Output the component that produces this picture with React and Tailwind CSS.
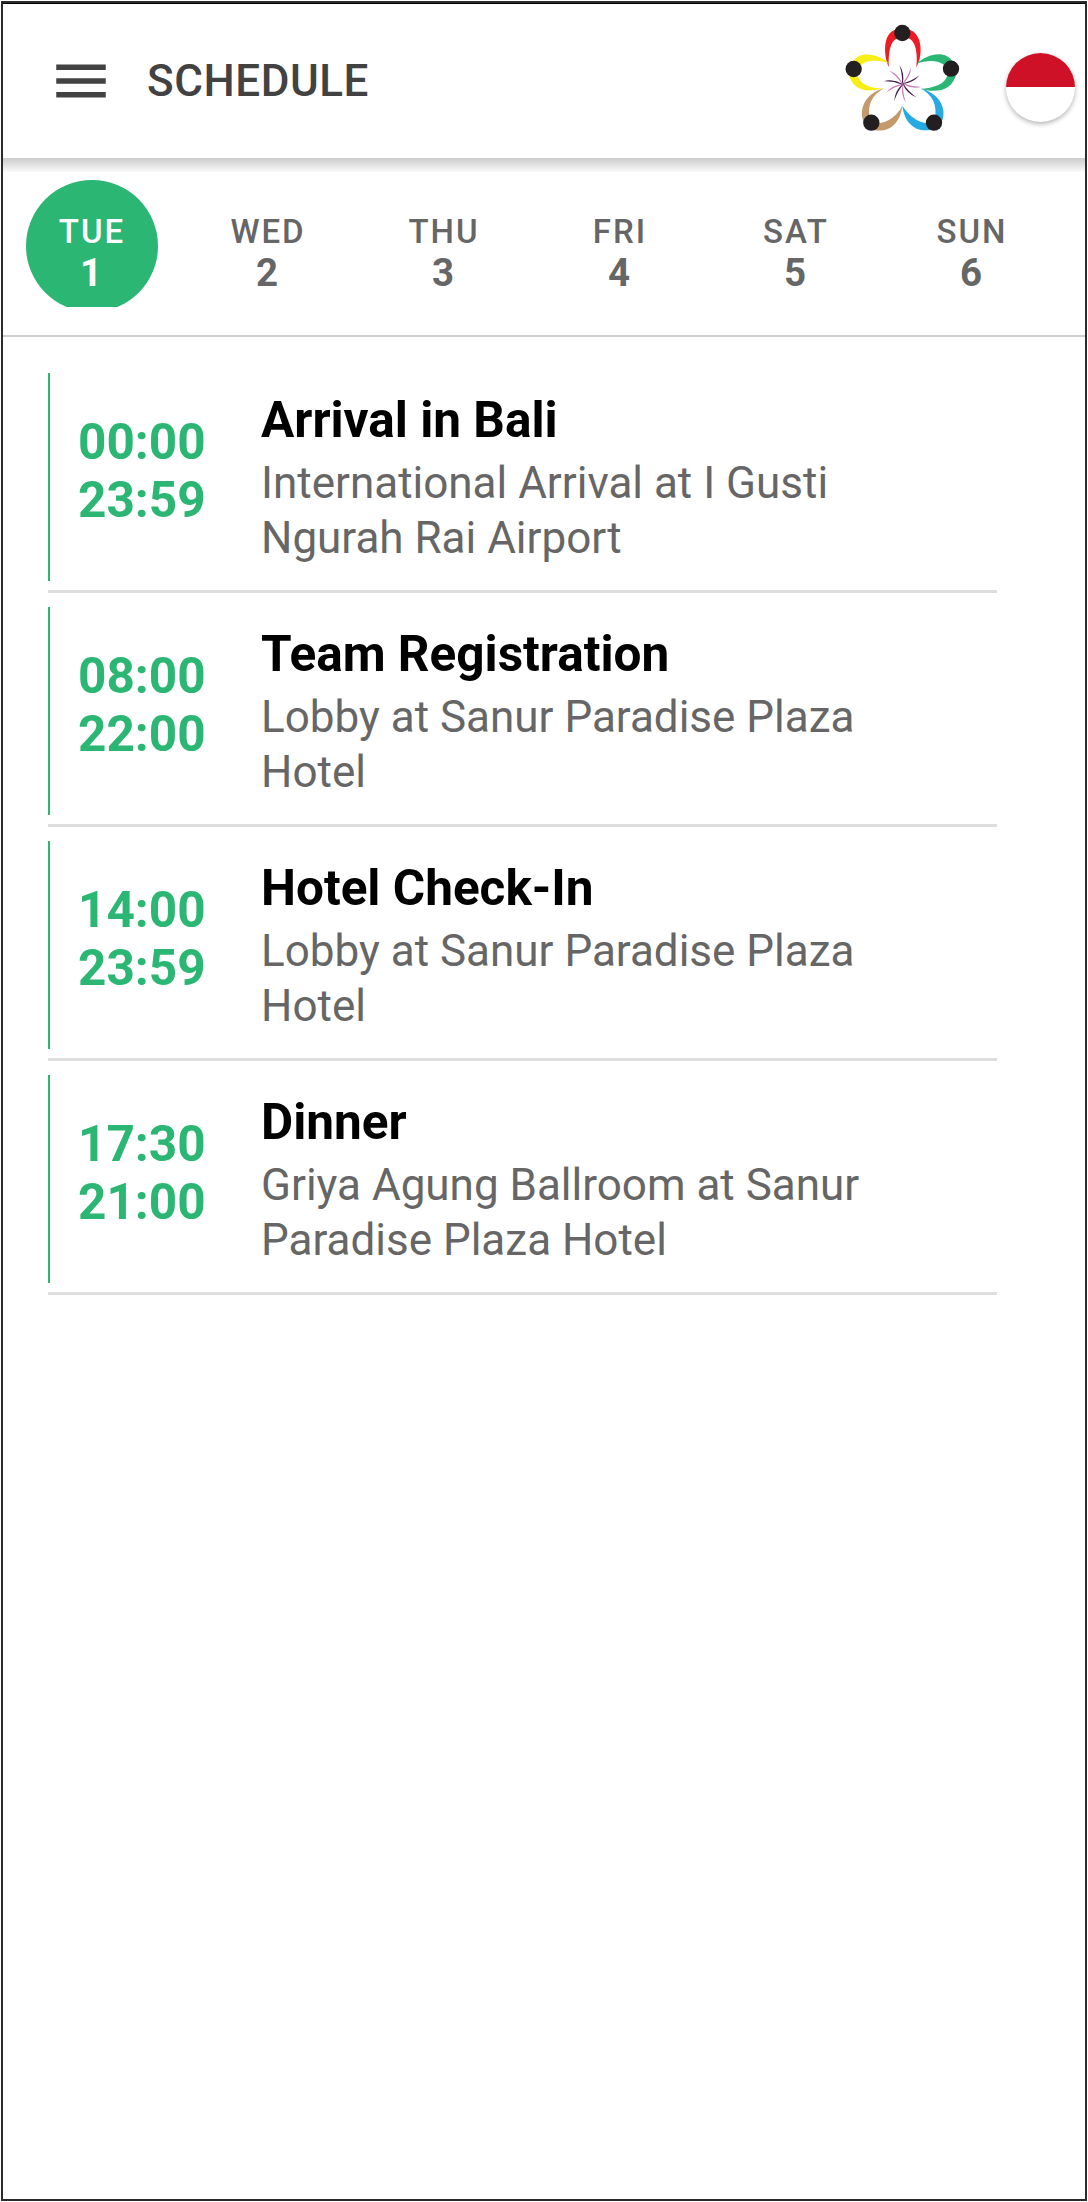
const days = [
  ['TUE', 1],
  ['WED', 2],
  ['THU', 3],
  ['FRI', 4],
  ['SAT', 5],
  ['SUN', 6],
];

const events = [
  { start: '00:00', end: '23:59', title: 'Arrival in Bali', place: 'International Arrival at I Gusti Ngurah Rai Airport' },
  { start: '08:00', end: '22:00', title: 'Team Registration', place: 'Lobby at Sanur Paradise Plaza Hotel' },
  { start: '14:00', end: '23:59', title: 'Hotel Check-In', place: 'Lobby at Sanur Paradise Plaza Hotel' },
  { start: '17:30', end: '21:00', title: 'Dinner', place: 'Griya Agung Ballroom at Sanur Paradise Plaza Hotel' },
];

const heads = [[217, 69], [71, 177], [363, 176], [124, 338], [312, 338]];

const blades = [0, 36, 72, 108, 144, 180, 216, 252, 288, 324];

function MenuIcon() {
  return (
    <svg viewBox="0 0 24 24" className="size-[66px] shrink-0" fill="#424242">
      <path d="M3 18h18v-2H3v2zm0-5h18v-2H3v2zm0-7v2h18V6H3z" />
    </svg>
  );
}

function Logo() {
  return (
    <svg viewBox="0 0 420 420" className="mb-[2px] size-[140px] shrink-0">
      <path fill="#ed1c24" d="M177 172C160 140 155 58 208 58L205 84C180 88 174 135 177 172ZM259 172C280 140 280 58 226 58L232 84C258 88 264 135 259 172Z" />
      <path fill="#f9ed16" d="M178 160C150 135 88 115 66 160L92 166C110 148 150 150 178 160ZM56 192C68 242 110 250 162 234C130 238 90 226 83 196Z" />
      <path fill="#2bb673" d="M260 161C290 134 346 116 370 158L342 165C322 148 290 151 260 161ZM379 192C366 242 322 250 272 237C310 234 345 224 352 196Z" />
      <path fill="#27aae1" d="M272 235C322 248 350 290 338 328L330 340L315 325C322 285 308 255 272 235ZM217 287C222 330 248 368 302 360L294 340C260 338 234 313 217 287Z" />
      <path fill="#c49a6c" d="M162 235C112 248 88 290 98 328L106 340L119 320C112 288 125 255 162 235ZM217 287C212 332 185 368 134 361L142 340C175 338 203 315 217 287Z" />
      {heads.map(([x, y]) => (
        <circle key={x} cx={x} cy={y} r="24.5" fill="#231f20" />
      ))}
      {blades.map((angle, i) => (
        <path
          key={angle}
          transform={`translate(218 222) rotate(${angle})`}
          d="M0 0Q7 -32 -10 -57Q0 -30 -2 0Z"
          fill={i % 2 ? '#c77fb8' : '#3f1a45'}
        />
      ))}
    </svg>
  );
}

function Header() {
  return (
    <header className="flex h-[154px] items-center bg-white pl-[45px]">
      <MenuIcon />
      <h1 className="ml-[33px] grow text-[44px] leading-none font-medium tracking-[0.55px] text-[#424242]">SCHEDULE</h1>
      <Logo />
      <div className="mt-[12px] mr-[10px] ml-[36px] flex size-[69px] shrink-0 flex-col overflow-hidden rounded-full bg-white shadow-[0_2px_5px_rgba(0,0,0,0.3)]">
        <div className="h-[34px] bg-[#ce1126]" />
      </div>
    </header>
  );
}

function DayTabs() {
  return (
    <nav className="h-[179px] border-b-2 border-[#cfcfcf]">
      <div className="h-[14px] bg-linear-to-b from-[#cbcbcb] to-[#fafafa]" />
      <div className="flex pt-[8px] pl-[1px]">
        {days.map(([name, date], i) => (
          <div key={name} className="flex h-[127px] w-[176px] shrink-0 justify-center overflow-hidden">
            <div
              className={
                i === 0
                  ? 'flex h-[132px] w-[132px] flex-col items-center rounded-full bg-[#2bb673] pt-[32px] text-white'
                  : 'flex h-[132px] w-[132px] flex-col items-center pt-[32px] text-[#666666]'
              }
            >
              <span className="text-[33px] leading-[39px] font-medium tracking-[2px]">{name}</span>
              <span className="mr-[2px] text-[38.5px] leading-[44px] font-bold">{date}</span>
            </div>
          </div>
        ))}
      </div>
    </nav>
  );
}

function EventRow({ event }) {
  return (
    <li className="mb-[14px] flex h-[220px] border-b-3 border-[#dedede] pb-[9px]">
      <div className="flex w-[213px] shrink-0 flex-col border-l-2 border-[#2bb673] pt-[40px] pl-[28px] text-[49.5px] leading-[58px] font-bold text-[#2bb673]">
        <span>{event.start}</span>
        <span>{event.end}</span>
      </div>
      <div className="w-[640px] pt-[18px]">
        <h2 className="text-[49.5px] leading-[58px] font-bold text-black">{event.title}</h2>
        <p className="mt-[7px] text-[44px] leading-[55px] text-[#666666]">{event.place}</p>
      </div>
    </li>
  );
}

export default function App() {
  return (
    <div className="h-[2202px] w-[1088px] overflow-hidden bg-white p-px font-['Roboto',sans-serif]">
      <div className="h-[2200px] w-[1086px] overflow-hidden border-2 border-[#2d2a2b] bg-white">
        <div className="h-px bg-black" />
        <Header />
        <DayTabs />
        <ul className="mt-[36px] ml-[45px] w-[949px]">
          {events.map((event) => (
            <EventRow key={event.title} event={event} />
          ))}
        </ul>
      </div>
    </div>
  );
}
